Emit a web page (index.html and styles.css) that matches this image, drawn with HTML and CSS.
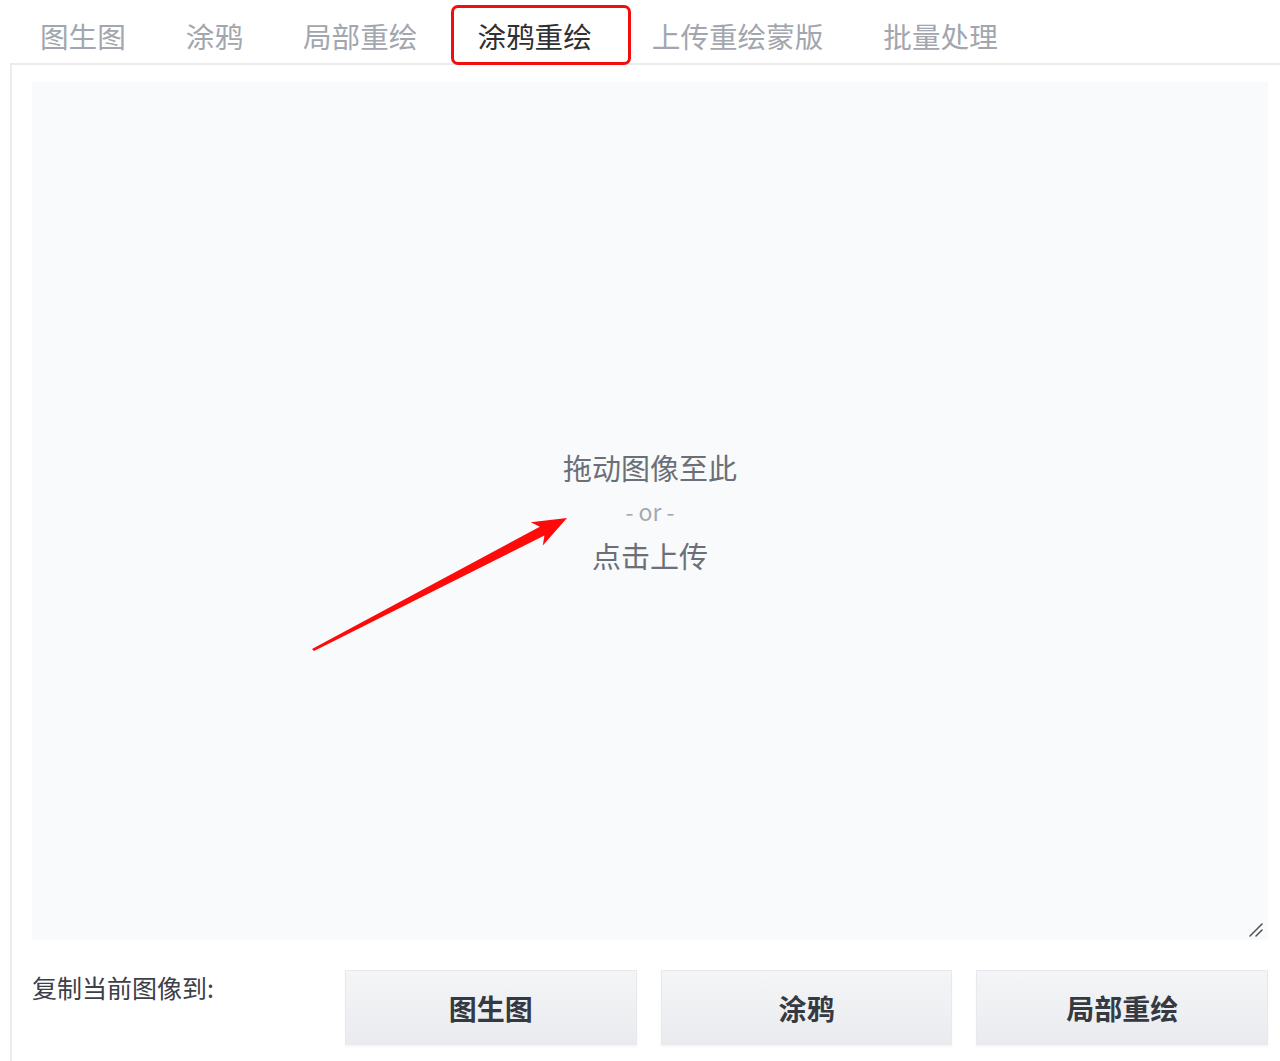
FILE: index.html
```html
<!DOCTYPE html>
<html lang="zh-CN">
<head>
    <meta charset="UTF-8">
    <meta name="viewport" content="width=device-width, initial-scale=1.0">
    <title>涂鸦重绘</title>
    <link rel="stylesheet" href="styles.css">
</head>
<body>
    <div class="page">
        <div class="tabs">
            <button class="tab">图生图</button>
            <button class="tab">涂鸦</button>
            <button class="tab">局部重绘</button>
            <button class="tab selected">涂鸦重绘</button>
            <button class="tab">上传重绘蒙版</button>
            <button class="tab">批量处理</button>
        </div>
        <div class="panel">
            <div class="upload">
                <p class="drop">拖动图像至此</p>
                <p class="or">- or -</p>
                <p class="drop">点击上传</p>
                <!-- 右下角拉伸把手 -->
                <svg class="resize" width="16" height="16" viewBox="0 0 16 16">
                    <line x1="2" y1="14" x2="14" y2="2" stroke="#555" stroke-width="1.6" stroke-linecap="round"/>
                    <line x1="8" y1="14" x2="14" y2="8" stroke="#555" stroke-width="1.6" stroke-linecap="round"/>
                </svg>
            </div>
            <div class="copy_row">
                <p class="copy_label">复制当前图像到:</p>
                <div class="copy_buttons">
                    <button class="copy_btn">图生图</button>
                    <button class="copy_btn">涂鸦</button>
                    <button class="copy_btn">局部重绘</button>
                </div>
            </div>
        </div>
        <!-- 标注箭头 -->
        <svg class="arrow" width="1280" height="1061" viewBox="0 0 1280 1061">
            <polygon fill="#ff0a0a" points="312,649 539.8,526.7 530.8,522.3 567,518 542.8,545.4 544.4,535.5 314,651"/>
        </svg>
    </div>
</body>
</html>
```

FILE: styles.css
```css
*{
    box-sizing: border-box;
}
body{
    margin: 0;
    background-color: #fff;
    font-family: "Noto Sans CJK SC", "Noto Sans", sans-serif;
}
.page{
    position: relative;
    width: 1280px;
    height: 1061px;
    overflow: hidden;
}
.tabs{
    display: flex;
    padding-left: 10px;
    padding-top: 8px;
    height: 63px;
}
.tab{
    position: relative;
    height: 55px;
    padding: 0 30px;
    border: none;
    background: none;
    font-family: inherit;
    font-size: 28.6px;
    line-height: 55px;
    color: #a2a6ae;
    cursor: pointer;
}
.tab.selected{
    color: #2f3033;
}
.tab.selected::after{
    content: "";
    position: absolute;
    left: 4px;
    right: -9px;
    top: -3px;
    bottom: -2px;
    border: 3px solid #f20d0d;
    border-radius: 7px;
}
.panel{
    margin-left: 10px;
    border-top: 2px solid #ebebed;
    border-left: 2px solid #ebebed;
    padding: 17px 12px 0 20px;
    height: 998px;
}
.upload{
    position: relative;
    height: 858px;
    background-color: #f9fafb;
    display: flex;
    flex-direction: column;
    align-items: center;
    justify-content: center;
}
.upload>p{
    margin: 0;
}
.drop{
    font-size: 29px;
    line-height: 44px;
    color: #6b6f78;
}
.or{
    font-size: 23px;
    line-height: 44px;
    color: #a4a8b0;
}
.resize{
    position: absolute;
    right: 4px;
    bottom: 2px;
}
.copy_row{
    display: flex;
    margin-top: 30px;
}
.copy_label{
    width: 313px;
    margin: 0;
    font-size: 25px;
    line-height: 34px;
    color: #3c4048;
}
.copy_buttons{
    flex: 1;
    display: flex;
    gap: 24px;
}
.copy_btn{
    flex: 1;
    height: 75px;
    border: 1px solid #e8e9ec;
    background: linear-gradient(to bottom, #f4f5f7, #eaebee);
    box-shadow: 0 2px 2px rgba(0, 0, 0, 0.04);
    font-family: inherit;
    font-size: 28px;
    font-weight: bold;
    color: #353a42;
    padding-top: 2px;
    cursor: pointer;
}
.arrow{
    position: absolute;
    left: 0;
    top: 0;
    pointer-events: none;
}
```
